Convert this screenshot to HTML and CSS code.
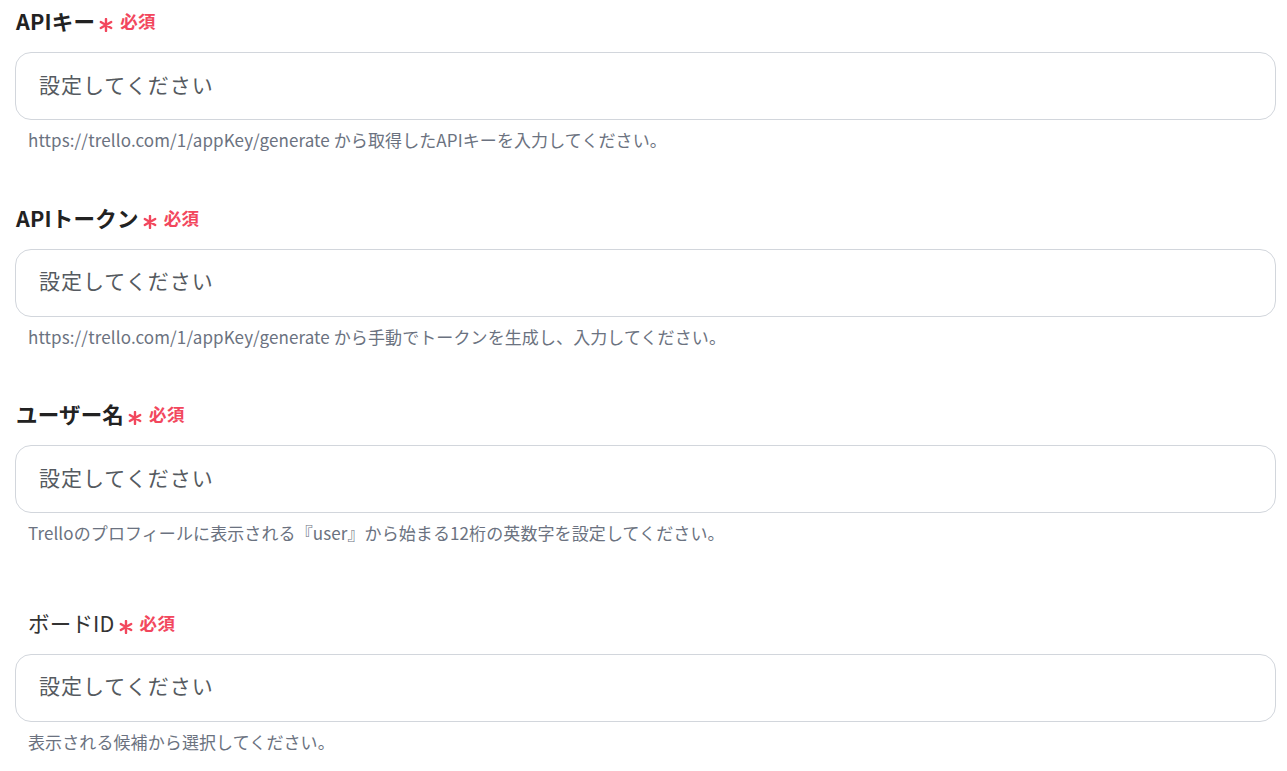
FILE: index.html
```html
<!DOCTYPE html>
<html lang="ja">
<head>
<meta charset="utf-8">
<link rel="stylesheet" href="styles.css">
</head>
<body>
<div class="form">
  <div class="field">
    <div class="label"><span class="label-text bold">APIキー</span><span class="req"><svg class="ast" viewBox="0 0 14 14" width="14" height="14"><path d="M7 1V13M1.8 4L12.2 10M1.8 10L12.2 4"/></svg><span class="req-text">必須</span></span></div>
    <div class="input">設定してください</div>
    <div class="help">https://trello.com/1/appKey/generate から取得したAPIキーを入力してください。</div>
  </div>
  <div class="field">
    <div class="label"><span class="label-text bold">APIトークン</span><span class="req"><svg class="ast" viewBox="0 0 14 14" width="14" height="14"><path d="M7 1V13M1.8 4L12.2 10M1.8 10L12.2 4"/></svg><span class="req-text">必須</span></span></div>
    <div class="input">設定してください</div>
    <div class="help">https://trello.com/1/appKey/generate から手動でトークンを生成し、入力してください。</div>
  </div>
  <div class="field">
    <div class="label"><span class="label-text bold">ユーザー名</span><span class="req"><svg class="ast" viewBox="0 0 14 14" width="14" height="14"><path d="M7 1V13M1.8 4L12.2 10M1.8 10L12.2 4"/></svg><span class="req-text">必須</span></span></div>
    <div class="input">設定してください</div>
    <div class="help">Trelloのプロフィールに表示される『user』から始まる12桁の英数字を設定してください。</div>
  </div>
  <div class="field select-field">
    <div class="label indent"><span class="label-text">ボードID</span><span class="req"><svg class="ast" viewBox="0 0 14 14" width="14" height="14"><path d="M7 1V13M1.8 4L12.2 10M1.8 10L12.2 4"/></svg><span class="req-text">必須</span></span></div>
    <div class="input">設定してください</div>
    <div class="help">表示される候補から選択してください。</div>
  </div>
</div>
</body>
</html>
```
FILE: styles.css
```css
html, body {
  margin: 0;
  padding: 0;
  background: #ffffff;
}
body {
  font-family: "Noto Sans CJK JP", "Noto Sans", sans-serif;
  color: #222;
}
.form {
  padding: 9px 11px 0 15px;
}
.field {
  margin-bottom: 54.5px;
}
.select-field {
  padding-top: 12px;
}
.label {
  box-sizing: border-box;
  display: flex;
  align-items: center;
  height: 28px;
  padding-bottom: 5px;
  margin-bottom: 15px;
  padding-left: 1px;
}
.label.indent {
  padding-left: 13px;
}
.label-text {
  font-size: 21.5px;
  color: #333;
  letter-spacing: 0.2px;
}
.label-text.bold {
  font-weight: 700;
  color: #222;
}
.req {
  display: flex;
  align-items: center;
  color: #f2475d;
  margin-left: 4px;
}
.ast {
  display: block;
  margin-top: 9px;
  fill: none;
  stroke: #f2475d;
  stroke-width: 2.4;
  stroke-linecap: round;
}
.req-text {
  font-weight: 700;
  font-size: 17.5px;
  letter-spacing: 0.3px;
  margin-left: 7px;
}
.input {
  box-sizing: border-box;
  height: 68px;
  border: 1px solid #d2d6dc;
  border-radius: 16px;
  display: flex;
  align-items: center;
  padding: 0 0 5px 23px;
  font-size: 21px;
  letter-spacing: 1px;
  color: #555a60;
}
.help {
  margin-top: 9px;
  margin-left: 13px;
  line-height: 22px;
  font-size: 17px;
  letter-spacing: 0.1px;
  color: #6b7280;
}
```
